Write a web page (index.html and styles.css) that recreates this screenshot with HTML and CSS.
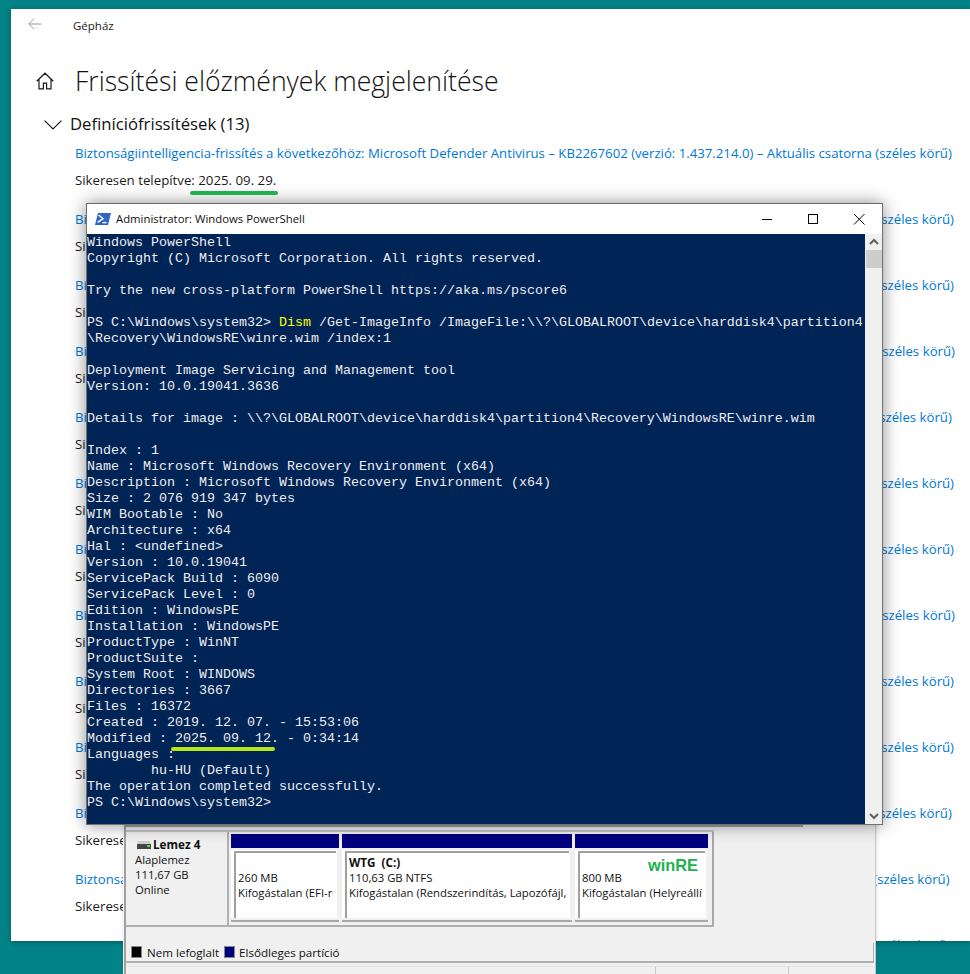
FILE: index.html
```html
<!DOCTYPE html>
<html lang="hu">
<head>
<meta charset="utf-8">
<title>Gépház</title>
<link rel="stylesheet" href="styles.css">
</head>
<body>
<div class="desktop">
  <section class="settings">
    <header class="settings-bar">
      <svg class="back-icon" width="14" height="12" viewBox="0 0 14 12"><path d="M13.5 6H1M6 .8 .8 6 6 11.2" fill="none" stroke="#9a9a9a" stroke-width="1"/></svg>
      <span class="app-name">Gépház</span>
    </header>
    <div class="page-title">
      <svg class="home-icon" width="18" height="18" viewBox="0 0 18 18"><path d="M.7 9.3 9 1.2l8.3 8.1M3 7.2v9.6h4.400v-5.600h3.200v5.600H15V7.200" fill="none" stroke="#1a1a1a" stroke-width="1.2"/></svg>
      <h1>Frissítési előzmények megjelenítése</h1>
    </div>
    <div class="section-head">
      <svg class="chevron" width="18" height="10" viewBox="0 0 18 10"><path d="M.6.6 9 9l8.400-8.400" fill="none" stroke="#1a1a1a" stroke-width="1.2"/></svg>
      <h2>Definíciófrissítések (13)</h2>
    </div>
    <ul class="updates">
      <li><a>Biztonságiintelligencia-frissítés a következőhöz: Microsoft Defender Antivirus – KB2267602 (verzió: 1.437.214.0) – Aktuális csatorna (széles körű)</a><p>Sikeresen telepítve: 2025. 09. 29.</p></li>
      <li class="plus2"><a>Biztonságiintelligencia-frissítés a következőhöz: Microsoft Defender Antivirus – KB2267602 (verzió: 1.437.184.0) – Aktuális csatorna (széles körű)</a><p>Sikeresen telepítve: 2025. 09. 28.</p></li>
      <li class="plus2"><a>Biztonságiintelligencia-frissítés a következőhöz: Microsoft Defender Antivirus – KB2267602 (verzió: 1.437.156.0) – Aktuális csatorna (széles körű)</a><p>Sikeresen telepítve: 2025. 09. 27.</p></li>
      <li class="plus3"><a>Biztonságiintelligencia-frissítés a következőhöz: Microsoft Defender Antivirus – KB2267602 (verzió: 1.437.120.0) – Aktuális csatorna (széles körű)</a><p>Sikeresen telepítve: 2025. 09. 26.</p></li>
      <li><a>Biztonságiintelligencia-frissítés a következőhöz: Microsoft Defender Antivirus – KB2267602 (verzió: 1.437.105.0) – Aktuális csatorna (széles körű)</a><p>Sikeresen telepítve: 2025. 09. 25.</p></li>
      <li class="plus2"><a>Biztonságiintelligencia-frissítés a következőhöz: Microsoft Defender Antivirus – KB2267602 (verzió: 1.437.171.0) – Aktuális csatorna (széles körű)</a><p>Sikeresen telepítve: 2025. 09. 24.</p></li>
      <li class="plus2"><a>Biztonságiintelligencia-frissítés a következőhöz: Microsoft Defender Antivirus – KB2267602 (verzió: 1.437.144.0) – Aktuális csatorna (széles körű)</a><p>Sikeresen telepítve: 2025. 09. 23.</p></li>
      <li class="plus3"><a>Biztonságiintelligencia-frissítés a következőhöz: Microsoft Defender Antivirus – KB2267602 (verzió: 1.437.120.0) – Aktuális csatorna (széles körű)</a><p>Sikeresen telepítve: 2025. 09. 22.</p></li>
      <li class="plus2"><a>Biztonságiintelligencia-frissítés a következőhöz: Microsoft Defender Antivirus – KB2267602 (verzió: 1.435.310.0) – Aktuális csatorna (széles körű)</a><p>Sikeresen telepítve: 2025. 09. 21.</p></li>
      <li class="plus2"><a>Biztonságiintelligencia-frissítés a következőhöz: Microsoft Defender Antivirus – KB2267602 (verzió: 1.435.282.0) – Aktuális csatorna (széles körű)</a><p>Sikeresen telepítve: 2025. 09. 20.</p></li>
      <li><a>Biztonságiintelligencia-frissítés a következőhöz: Microsoft Defender Antivirus – KB2267602 (verzió: 1.435.250.0) – Aktuális csatorna (széles körű)</a><p>Sikeresen telepítve: 2025. 09. 19.</p></li>
      <li class="minus2"><a>Biztonságiintelligencia-frissítés a következőhöz: Microsoft Defender Antivirus – KB2267602 (verzió: 1.435.234.0) – Aktuális csatorna (széles körű)</a><p>Sikeresen telepítve: 2025. 09. 18.</p></li>
      <li class="minus2"><a>Biztonságiintelligencia-frissítés a következőhöz: Microsoft Defender Antivirus – KB2267602 (verzió: 1.435.205.0) – Aktuális csatorna (széles körű)</a><p>Sikeresen telepítve: 2025. 09. 17.</p></li>
    </ul>
  </section>

  <section class="disk">
    <div class="disk-top"></div>
    <div class="disk-row">
      <div class="disk-label">
        <strong><svg class="drive-icon" width="14" height="8" viewBox="0 0 14 8"><path d="M1 0h12l1 3H0z" fill="#cfcfcf"/><rect x="0" y="3" width="14" height="5" fill="#454545"/><rect x="10" y="4" width="3" height="2" fill="#4ddc4d"/></svg>Lemez 4</strong>
        <span>Alaplemez</span>
        <span>111,67 GB</span>
        <span>Online</span>
      </div>
      <div class="partitions">
        <div class="partition p-efi">
          <div class="partition-cap"></div>
          <div class="partition-body"><div class="partition-inner"><b>&nbsp;</b><span>260 MB</span><span>Kifogástalan (EFI-rendszerpartíció)</span></div></div>
        </div>
        <div class="partition p-win">
          <div class="partition-cap"></div>
          <div class="partition-body"><div class="partition-inner"><b>WTG&nbsp; (C:)</b><span>110,63 GB NTFS</span><span>Kifogástalan (Rendszerindítás, Lapozófájl, Összeomlási memóriakép)</span></div></div>
        </div>
        <div class="partition p-re">
          <div class="partition-cap"></div>
          <div class="partition-body"><div class="partition-inner"><b>&nbsp;</b><span>800 MB</span><span>Kifogástalan (Helyreállítási partíció)</span><b class="winre">winRE</b></div></div>
        </div>
      </div>
    </div>
    <div class="legend">
      <i class="swatch swatch-black"></i><span class="legend-first">Nem lefoglalt</span>
      <i class="swatch swatch-navy"></i><span>Elsődleges partíció</span>
    </div>
    <div class="statusbar"><i></i><i></i></div>
  </section>

  <section class="ps">
    <header class="ps-bar">
      <svg class="ps-icon" width="16" height="12" viewBox="0 0 16 12"><path d="M3 0h13l-3 12H0z" fill="#2f66c4"/><path d="M3.600 2 8 5.600 2.600 9.400" fill="none" stroke="#fff" stroke-width="1.5"/><path d="M7.500 9.600h4" stroke="#fff" stroke-width="1.4"/></svg>
      <span class="ps-title">Administrator: Windows PowerShell</span>
      <div class="caption">
        <svg width="46" height="30" viewBox="0 0 46 30"><path d="M18 15.500h10" stroke="#000"/></svg>
        <svg width="46" height="30" viewBox="0 0 46 30"><rect x="18.500" y="10.500" width="9" height="9" fill="none" stroke="#000"/></svg>
        <svg width="46" height="30" viewBox="0 0 46 30"><path d="M18 10l10.500 10.500M28.500 10 18 20.500" stroke="#000" fill="none"/></svg>
      </div>
    </header>
    <div class="ps-main">
<pre class="console">Windows PowerShell
Copyright (C) Microsoft Corporation. All rights reserved.

Try the new cross-platform PowerShell https://aka.ms/pscore6

PS C:\Windows\system32&gt; <em>Dism</em> /Get-ImageInfo /ImageFile:\\?\GLOBALROOT\device\harddisk4\partition4
\Recovery\WindowsRE\winre.wim /index:1

Deployment Image Servicing and Management tool
Version: 10.0.19041.3636

Details for image : \\?\GLOBALROOT\device\harddisk4\partition4\Recovery\WindowsRE\winre.wim

Index : 1
Name : Microsoft Windows Recovery Environment (x64)
Description : Microsoft Windows Recovery Environment (x64)
Size : 2 076 919 347 bytes
WIM Bootable : No
Architecture : x64
Hal : &lt;undefined&gt;
Version : 10.0.19041
ServicePack Build : 6090
ServicePack Level : 0
Edition : WindowsPE
Installation : WindowsPE
ProductType : WinNT
ProductSuite :
System Root : WINDOWS
Directories : 3667
Files : 16372
Created : 2019. 12. 07. - 15:53:06
Modified : 2025. 09. 12. - 0:34:14
Languages :
        hu-HU (Default)
The operation completed successfully.
PS C:\Windows\system32&gt;</pre>
      <div class="scrollbar">
        <svg width="16" height="16" viewBox="0 0 16 16"><path d="M4 10l4-4 4 4" fill="none" stroke="#606060" stroke-width="2"/></svg>
        <div class="thumb"></div>
        <svg class="scroll-down" width="16" height="16" viewBox="0 0 16 16"><path d="M4 6l4 4 4-4" fill="none" stroke="#606060" stroke-width="2"/></svg>
      </div>
    </div>
  </section>

  <div class="mark mark-green"></div>
  <div class="mark mark-lime"></div>
</div>
</body>
</html>
```
FILE: styles.css
```css
* { box-sizing: border-box; }
html, body { margin: 0; padding: 0; }
body { width: 970px; height: 974px; overflow: hidden; background: #038387; }
.desktop { position: relative; width: 970px; height: 974px; overflow: hidden; }

.settings {
  position: absolute; left: 11px; top: 9px; width: 959px; height: 932px;
  background: #fff; overflow: hidden; font-family: "Open Sans", sans-serif; color: #111;
  box-shadow: 0 1px 5px rgba(0,0,0,.35);
}
.settings-bar { display: flex; align-items: center; height: 32px; padding-left: 17px; }
.back-icon { display: block; margin-bottom: 2px; }
.app-name { margin-left: 31px; font-size: 11.5px; color: #1c1c1c; }
.page-title { display: flex; align-items: center; margin-top: 12px; height: 56px; padding-left: 25px; }
.home-icon { display: block; }
.page-title h1 { margin: 0 0 0 21px; font-size: 26.6px; font-weight: 300; color: #111; white-space: nowrap; }
.section-head { display: flex; align-items: center; height: 26px; margin-top: 1px; padding-left: 33px; }
.chevron { display: block; margin-top: 4px; }
.section-head h2 { margin: 0 0 0 8px; font-size: 16.7px; font-weight: 400; white-space: nowrap; }
.updates { list-style: none; margin: 0; padding: 0 0 0 64px; }
.updates li { height: 66px; padding-top: 7px; }
.updates a { display: block; font-size: 13.2px; line-height: 20px; color: #0078d7; white-space: nowrap; }
.updates p { margin: 7px 0 0; font-size: 13.25px; line-height: 20px; color: #1a1a1a; white-space: nowrap; }
.updates .plus2 a { word-spacing: .16px; }
.updates .plus3 a { word-spacing: .23px; }
.updates .minus2 a { word-spacing: -.16px; }

.disk {
  position: absolute; left: 124px; top: 805px; width: 752px; height: 169px;
  background: #f0f0f0; border-left: 2px solid #a0a0a0; border-right: 1px solid #c8c8c8;
  box-shadow: -1px 0 0 #f5f5f5, 0 0 4px rgba(0,0,0,.18);
  font-family: "Open Sans", sans-serif; font-size: 11px; color: #111;
}
.disk-top { height: 22px; width: 677px; border-bottom: 2px solid #a0a0a0; border-right: 2px solid #a0a0a0; }
.disk-row { display: flex; height: 97px; margin-top: 3px; border-bottom: 2px solid #b0b0b0; border-top: 2px solid #c4c4c4; width: 588px; }
.disk-label { width: 103px; padding: 5px 0 0 9px; display: flex; flex-direction: column; font-size: 11.3px; line-height: 15px; border-right: 2px solid #b0b0b0; }
.disk-label strong { font-weight: 700; display: flex; align-items: center; color: #111; margin: 0 0 0 2px; font-size: 11.7px; }
.drive-icon { margin-right: 2px; }
.partitions { display: flex; flex: 1; gap: 3px; padding: 2px 3px 3px 2px; background: #f0f0f0; border-right: 2px solid #a8a8a8; }
.partition { display: flex; flex-direction: column; min-width: 0; border-bottom: 2px solid #a8a8a8; }
.p-efi { width: 108px; flex: none; }
.p-win { width: 230px; flex: none; }
.p-re { width: 133px; flex: none; }
.partition-cap { height: 14px; background: #000080; flex: none; }
.partition-body { flex: 1; min-height: 0; margin: 2px 2px 2px 0; padding: 1px 1px 0 3px; background: #fff; }
.partition-inner {
  position: relative; height: 100%; padding: 2px 3px 0 2px;
  border-top: 2px solid #a0a0a0; border-left: 2px solid #a0a0a0;
  overflow: hidden; display: flex; flex-direction: column; font-size: 11.3px; line-height: 15px; white-space: nowrap;
}
.partition-inner span { display: block; overflow: hidden; }
.partition-inner b { display: block; font-size: 11.7px; }
.partition-inner .winre {
  position: absolute; right: 7px; top: 5px;
  color: #22b14c; font-family: "Liberation Sans", sans-serif; font-size: 16.4px;
}
.legend { display: flex; align-items: center; height: 20px; margin-top: 16px; width: 748px; padding-left: 5px; border-bottom: 2px solid #b0b0b0; border-right: 1px solid #b0b0b0; background: #f0f0f0; font-size: 11.6px; }
.swatch { width: 11px; height: 12px; border: 1px solid #888; flex: none; }
.swatch-black { background: #000; }
.swatch-navy { background: #000080; margin-left: 5px; margin-right: 4px; }
.legend-first { margin-left: 5px; }
.statusbar { display: flex; height: 8px; margin-top: 3px; border-top: 1px solid #e4e4e4; }
.statusbar i { width: 1px; height: 8px; background: #c8c8c8; }
.statusbar i:nth-child(1) { margin-left: 529px; }
.statusbar i:nth-child(2) { margin-left: 132px; }

.ps {
  position: absolute; left: 86px; top: 203px; width: 797px; height: 622px;
  background: #fff; border: 1px solid #707070; border-top-color: #6a6a6a;
  box-shadow: 0 0 16px rgba(0,0,0,.45);
  display: flex; flex-direction: column;
  font-family: "Open Sans", sans-serif;
}
.ps-bar { display: flex; align-items: center; height: 30px; flex: none; padding-left: 8px; }
.ps-icon { display: block; }
.ps-title { margin: 0 0 2px 5px; font-size: 11.33px; color: #111; }
.caption { display: flex; margin-left: auto; }
.caption svg { display: block; }
.ps-main { display: flex; flex: 1; min-height: 0; }
.console {
  flex: 1; margin: 0; padding: 1px 0 0; background: #012456; color: #eeedf0;
  font-family: "Liberation Mono", monospace; font-size: 13.333px; line-height: 16px; overflow: hidden; white-space: pre;
}
.console em { font-style: normal; color: #ffff00; }
.scrollbar { width: 17px; flex: none; background: #f0f0f0; display: flex; flex-direction: column; align-items: center; }
.scrollbar svg { display: block; flex: none; }
.thumb { width: 16px; height: 18px; background: #cdcdcd; }
.scroll-down { margin-top: auto; }

.mark { position: absolute; height: 4px; border-radius: 2px; }
.mark-green { left: 190px; top: 191px; width: 88px; background: #22b14c; }
.mark-lime { left: 171px; top: 747px; width: 104px; background: #b5e61d; }
```
